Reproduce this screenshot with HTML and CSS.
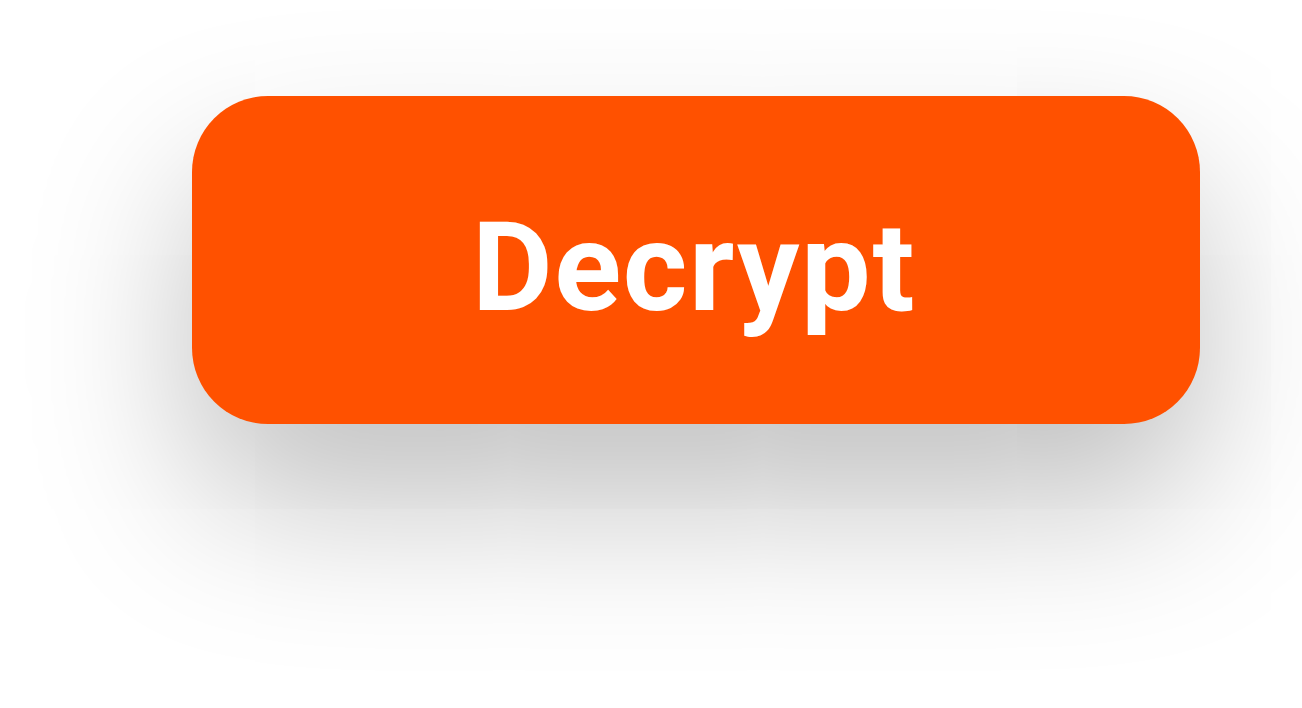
FILE: index.html
```html
<!DOCTYPE html>
<html>
<head>
<meta charset="utf-8">
<link rel="stylesheet" href="styles.css">
</head>
<body>
<div class="stage">
  <button class="btn">Decrypt</button>
</div>
</body>
</html>
```
FILE: styles.css
```css
html, body {
  margin: 0;
  padding: 0;
  background: #ffffff;
  width: 1302px;
  height: 708px;
  overflow: hidden;
}
.stage {
  padding: 96px 0 0 192px;
}
.btn {
  display: flex;
  align-items: center;
  justify-content: center;
  box-sizing: border-box;
  width: 1008px;
  height: 328px;
  border: none;
  border-radius: 76px;
  background: #ff5100;
  color: #ffffff;
  font-family: Roboto, "Liberation Sans", sans-serif;
  font-weight: 700;
  font-size: 124px;
  letter-spacing: 1.6px;
  line-height: 1;
  padding: 16px 4px 0 0;
  box-shadow: 0 80px 160px rgba(0, 0, 0, 0.25);
}
```
